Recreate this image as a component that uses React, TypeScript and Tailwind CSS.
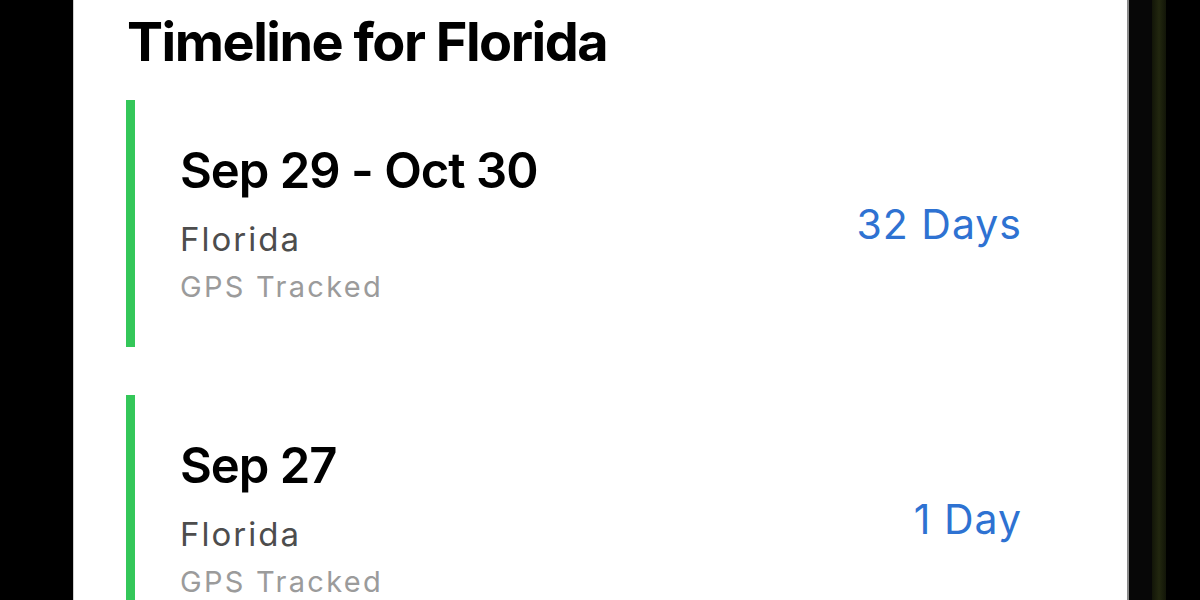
import React from "react";

interface Stay {
  range: string;
  place: string;
  source: string;
  days: string;
}

const stays: Stay[] = [
  { range: "Sep 29 - Oct 30", place: "Florida", source: "GPS Tracked", days: "32 Days" },
  { range: "Sep 27", place: "Florida", source: "GPS Tracked", days: "1 Day" },
];

const font = { fontFamily: "Inter, 'Noto Sans', sans-serif" };

const StayRow: React.FC<{ stay: Stay }> = ({ stay }) => (
  <div className="flex h-[247px] shrink-0 items-center border-l-[9px] border-[#34c759] pl-[45px]">
    <div className="flex flex-1 flex-col">
      <div className="text-[49px] leading-[56px] font-semibold text-black tracking-[-1px]">
        {stay.range}
      </div>
      <div className="mt-[20px] text-[33px] leading-[40px] text-[#4d4d4d] tracking-[2px]">
        {stay.place}
      </div>
      <div className="mt-[10px] text-[29px] leading-[36px] text-[#9b9b9b] tracking-[2.3px]">
        {stay.source}
      </div>
    </div>
    <div className="text-[41px] leading-[48px] text-[#2e72d2] tracking-[1px]">{stay.days}</div>
  </div>
);

export default function App() {
  return (
    <div className="flex h-[600px] w-[1200px] overflow-hidden bg-black" style={font}>
      <div className="w-[73px] shrink-0 bg-black" />
      <div className="flex w-[1054px] shrink-0 flex-col gap-[48px] border-l border-[#cfcfcf] bg-white pl-[52px] pr-[105px] pt-[9px]">
        <h1 className="-mb-[23px] pl-[1px] text-[54px] leading-[66px] font-bold text-black tracking-[-1.5px]">
          Timeline for Florida
        </h1>
        {stays.map((s) => (
          <StayRow key={s.range} stay={s} />
        ))}
      </div>
      <div className="w-[2px] shrink-0 bg-[#8a8a8a]" />
      <div className="w-[23px] shrink-0 bg-[#070707]" />
      <div className="w-[14px] shrink-0 bg-gradient-to-r from-[#121508] via-[#22270f] to-[#121508]" />
      <div className="flex-1 bg-black" />
    </div>
  );
}
